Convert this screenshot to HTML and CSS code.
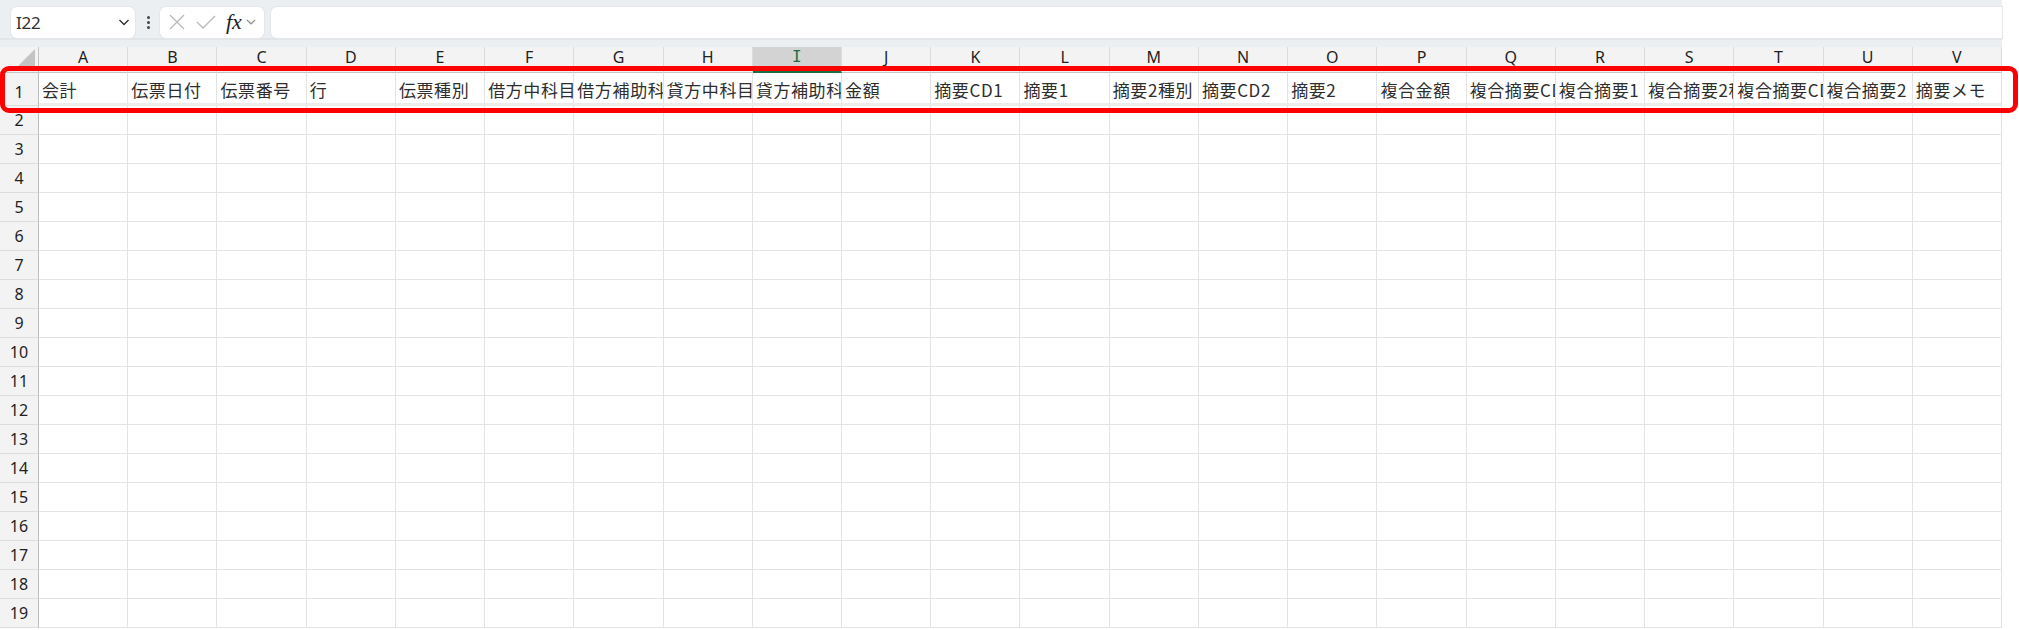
FILE: index.html
```html
<!DOCTYPE html>
<html lang="ja">
<head>
    <meta charset="UTF-8">
    <meta name="viewport" content="width=device-width, initial-scale=1.0">
    <title>Book1 - Excel</title>
    <link rel="stylesheet" href="styles.css">
</head>
<body>

<div class="app">
    <!-- name box + formula bar -->
    <div class="toolbar">
        <div class="namebox">
            <span class="ref">I22</span>
            <svg class="chev" width="14" height="14" viewBox="0 0 14 14"><path d="M2.5 5 L7 9.5 L11.5 5" fill="none" stroke="#333" stroke-width="1.4"/></svg>
        </div>
        <div class="dots"><i></i><i></i><i></i></div>
        <div class="fxgroup">
            <svg width="20" height="20" viewBox="0 0 20 20"><path d="M3 3 L17 17 M17 3 L3 17" stroke="#b9b9b9" stroke-width="1.3"/></svg>
            <svg width="22" height="20" viewBox="0 0 22 20"><path d="M2 10 L8 16 L20 4" fill="none" stroke="#b9b9b9" stroke-width="1.3"/></svg>
            <span class="fx">fx</span>
            <svg width="12" height="12" viewBox="0 0 12 12"><path d="M2 4 L6 8 L10 4" fill="none" stroke="#888" stroke-width="1.2"/></svg>
        </div>
        <div class="formula"></div>
    </div>

    <div class="sheet" id="sheet"></div>

    <div class="mark"></div>
</div>

<script>
    const sheet = document.getElementById('sheet')
    const cols = 'ABCDEFGHIJKLMNOPQRSTUV'.split('')
    const heads = ['会計','伝票日付','伝票番号','行','伝票種別','借方中科目','借方補助科目','貸方中科目','貸方補助科目','金額',
      '摘要CD1','摘要1','摘要2種別','摘要CD2','摘要2','複合金額','複合摘要CD1','複合摘要1','複合摘要2種別','複合摘要CD2','複合摘要2','摘要メモ']

    function cell(cls, text){
      let d = document.createElement('div')
      d.className = cls
      if(text) d.textContent = text
      sheet.appendChild(d)
      return d
    }

    cell('corner')
    cols.forEach(c => cell(c === 'I' ? 'colhead sel' : 'colhead', c))

    for(let r = 1; r <= 19; r++){
      cell(r === 1 ? 'rowhead first' : 'rowhead', r)
      for(let i = 0; i < cols.length; i++){
        cell(r === 1 ? 'c first' : 'c', r === 1 ? heads[i] : '')
      }
    }
</script>

</body>
</html>
```

FILE: styles.css
```css
html {
  font-family: "Noto Sans", "Noto Sans CJK JP", sans-serif;
}

body {
  margin: 0;
  background-color: #fff;
}

.app {
  position: relative;
  width: 2002px;
  height: 630px;
  background-color: #eceff2;
}

.toolbar {
  display: flex;
  align-items: center;
  height: 32px;
  padding: 6px 0 0 11px;
  border-bottom: 2px solid #e2e5e8;
}

.namebox {
  box-sizing: border-box;
  display: flex;
  align-items: center;
  justify-content: space-between;
  width: 124px;
  height: 31px;
  padding: 0 4px 0 5px;
  background-color: #fff;
  border-radius: 6px;
  box-shadow: 0 0 0 1px #e4e6e9;
}

.ref {
  font-size: 17px;
  color: #303030;
  letter-spacing: -0.3px;
}

.dots {
  display: flex;
  flex-direction: column;
  gap: 2px;
  margin: 0 10px 0 12px;
}

.dots i {
  display: block;
  width: 3px;
  height: 3px;
  border-radius: 2px;
  background-color: #444;
}

.fxgroup {
  box-sizing: border-box;
  display: flex;
  align-items: center;
  gap: 8px;
  width: 104px;
  height: 31px;
  padding-left: 7px;
  background-color: #fff;
  border-radius: 6px;
  box-shadow: 0 0 0 1px #e4e6e9;
}

.fx {
  font-family: "Liberation Serif", serif;
  font-style: italic;
  font-size: 22px;
  color: #222;
  margin-left: 1px;
  margin-right: -5px;
}

.formula {
  flex: 1;
  height: 31px;
  margin-left: 7px;
  background-color: #fff;
  border-radius: 6px 0 0 6px;
  box-shadow: 0 0 0 1px #e4e6e9;
}

.sheet {
  display: grid;
  grid-template-columns: 39px repeat(22, 1fr);
  grid-template-rows: 26px 33px repeat(19, 29px);
  margin-top: 7px;
  background-color: #fff;
}

.sheet > div {
  box-sizing: border-box;
  min-width: 0;
}

.corner {
  position: relative;
  background-color: #f3f3f3;
  border-right: 1px solid #c4c4c4;
  border-bottom: 1px solid #c4c4c4;
  overflow: hidden;
}

.corner::after {
  content: "";
  position: absolute;
  right: 3px;
  bottom: 3px;
  border-left: 20px solid transparent;
  border-bottom: 20px solid #c3c3c3;
}

.colhead {
  display: flex;
  align-items: center;
  justify-content: center;
  padding-bottom: 5px;
  font-size: 16px;
  color: #1f1f1f;
  background-color: #f3f3f3;
  border-right: 1px solid #dcdcdc;
  border-bottom: 1px solid #c4c4c4;
}

.colhead.sel {
  font-family: "DejaVu Sans Mono", monospace;
  color: #1e6e42;
  background-color: #d3d3d3;
  border-bottom: 2px solid #1e6e42;
}

.rowhead {
  display: flex;
  align-items: center;
  justify-content: center;
  font-size: 16px;
  color: #1f1f1f;
  background-color: #f3f3f3;
  border-right: 1px solid #bdbdbd;
  border-bottom: 1px solid #dcdcdc;
}

.rowhead.first {
  padding-top: 6px;
}

.c {
  border-right: 1px solid #e3e3e3;
  border-bottom: 1px solid #e3e3e3;
}

.c.first {
  display: flex;
  align-items: flex-end;
  padding: 0 0 1px 3px;
  font-family: "Noto Sans CJK JP", sans-serif;
  font-size: 17px;
  letter-spacing: 0.6px;
  color: #2e2e2e;
  white-space: nowrap;
  overflow: hidden;
  border-bottom: 3px solid #ececec;
}

/* red callout around the header row */
.mark {
  position: absolute;
  left: 0;
  top: 66px;
  width: 2018px;
  height: 47px;
  box-sizing: border-box;
  border: 5px solid #ff0000;
  border-radius: 9px;
}
```
